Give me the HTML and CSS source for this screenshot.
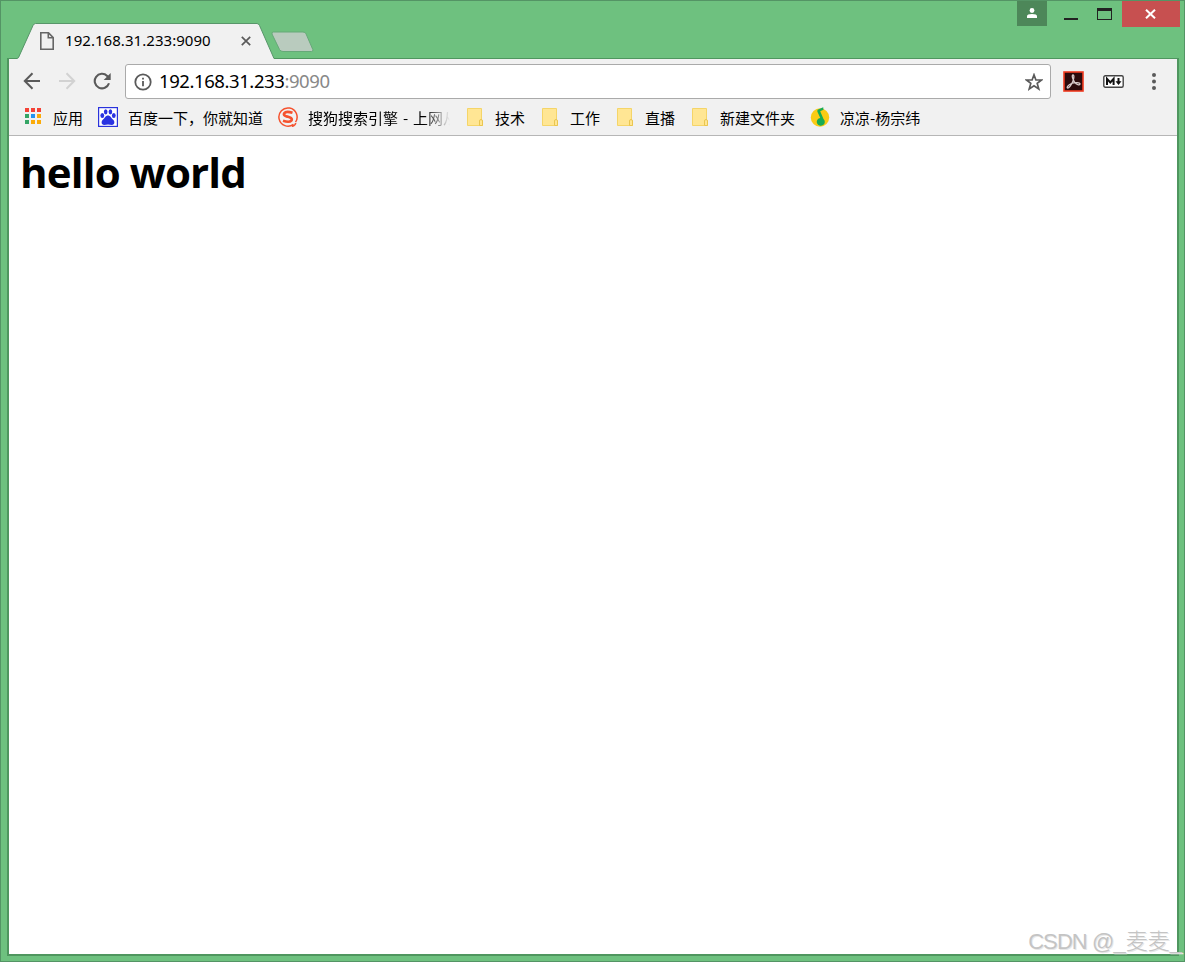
FILE: index.html
```html
<!DOCTYPE html>
<html lang="zh-CN">
<head>
    <meta charset="UTF-8">
    <title>192.168.31.233:9090</title>
    <link rel="stylesheet" href="styles.css">
</head>
<body>
    <div class="window">
        <header class="titlebar">
            <div class="tab">
                <svg class="tab-shape" width="258" height="37" viewBox="0 0 258 37">
                    <path d="M0 37V35.5L1.5 35 16 2.5Q17 .5 18.500 .5H240Q241.500 .5 242.500 2.500L257 35.500V37Z" fill="#f1f1f1"/>
                    <path d="M0 35.5L1.500 34.500 16 2.500Q17 .5 18.500 .5H240Q241.500 .5 242.500 2.500L257 35.500" fill="none" stroke="#58966a"/>
                </svg>
                <svg class="tab-page" width="14" height="18" viewBox="0 0 14 18" fill="none" stroke="#666" stroke-width="1.600">
                    <path d="M.8.8H8.500L13.200 5.600V17.200H.8ZM8.300 1V5.800H13"/>
                </svg>
                <span class="tab-title">192.168.31.233:9090</span>
                <svg class="tab-close" width="10" height="10" viewBox="0 0 10 10" stroke="#5a5a5a" stroke-width="1.700">
                    <path d="M.8.8L9.200 9.200M9.200.8L.8 9.200"/>
                </svg>
            </div>
            <svg class="new-tab" width="43" height="22" viewBox="0 0 43 22">
                <path d="M2.500 1H32Q34 1 35 2.800L41.800 18.500Q42.500 20.500 40.500 20.500H12Q9.500 20.500 8.500 18.500L1 3Q.5 1 2.500 1Z" fill="#b9cbbe" stroke="#66a978"/>
            </svg>
            <div class="controls">
                <div class="user">
                    <svg width="10" height="10" viewBox="0 0 10 10" fill="#fff"><circle cx="5" cy="2.500" r="2.400"/><path d="M0 10V8.200Q0 6 5 6T10 8.200V10Z"/></svg>
                </div>
                <div class="minimize"></div>
                <div class="maximize"></div>
                <div class="close">
                    <svg width="11" height="10" viewBox="0 0 11 10" stroke="#fff" stroke-width="2"><path d="M1 .7L10 9.300M10 .7L1 9.300"/></svg>
                </div>
            </div>
        </header>

        <main class="browser">
            <div class="toolbar">
                <svg class="back" width="18" height="18" viewBox="0 0 18 18" fill="none" stroke="#5a5a5a" stroke-width="2"><path d="M17 9H2M9.500 1.300L1.800 9L9.500 16.700"/></svg>
                <svg class="forward" width="18" height="18" viewBox="0 0 18 18" fill="none" stroke="#d2d2d2" stroke-width="2"><path d="M1 9H16M8.500 1.300L16.200 9L8.500 16.700"/></svg>
                <svg class="reload" width="18" height="18" viewBox="0 0 18 18"><path d="M16 11.300A7.300 7.300 0 1 1 14.200 3.900L16 5.700" fill="none" stroke="#5a5a5a" stroke-width="2.100"/><path d="M17.700 1V8H10.700Z" fill="#5a5a5a"/></svg>
                <div class="address">
                    <svg width="18" height="18" viewBox="0 0 18 18"><circle cx="9" cy="9" r="7.700" fill="none" stroke="#5a5a5a" stroke-width="1.800"/><path d="M8.100 4.800H9.900V6.600H8.100ZM8.100 8H9.900V13.200H8.100Z" fill="#5a5a5a"/></svg>
                    <span class="url">192.168.31.233<span class="port">:9090</span></span>
                    <svg class="star" width="18" height="18" viewBox="0 0 18 18"><path d="M9 1.800L10.900 7H16.500L12.200 10.400L13.800 16L9 12.800L4.200 16L5.800 10.400L1.500 7H7.100Z" fill="none" stroke="#5a5a5a" stroke-width="1.700"/></svg>
                </div>
                <svg class="pdf" width="21" height="21" viewBox="0 0 21 21">
                    <rect x="1" y="1" width="19" height="19" fill="#2b0a0c" stroke="#f03a20" stroke-width="1.600"/>
                    <path d="M10 4C8.500 4 9.500 8 11.500 11S16.500 14.500 17 13 12 11 8.500 12.500 3.500 16.500 4.500 17 8.500 14 9.800 10.500 11.300 4 10 4Z" fill="none" stroke="#d8c9c9" stroke-width="1.300"/>
                </svg>
                <svg class="markdown" width="21" height="13" viewBox="0 0 21 13">
                    <rect x=".8" y=".8" width="19.400" height="11.400" rx="1.500" fill="#fff" stroke="#444" stroke-width="1.400"/>
                    <path d="M4 10V3.800L7.300 7.500L10.600 3.800V10" fill="none" stroke="#111" stroke-width="2"/>
                    <path d="M14.500 3H16.500V6.300H18.500L15.500 10L12.500 6.300H14.500Z" fill="#111"/>
                </svg>
                <svg class="menu" width="4" height="17" viewBox="0 0 4 17" fill="#5a5a5a"><circle cx="2" cy="2" r="2"/><circle cx="2" cy="8.500" r="2"/><circle cx="2" cy="15" r="2"/></svg>
            </div>

            <nav class="bookmarks">
                <div class="bookmark">
                    <svg width="20" height="20" viewBox="0 0 20 20">
                        <path d="M2 1H6V5H2ZM8 1H12V5H8ZM14 1H18V5H14Z" fill="#f44236"/>
                        <path d="M8 7H12V11H8Z" fill="#2493f0"/>
                        <path d="M2 7H6V11H2ZM2 13H6V17H2Z" fill="#35a565"/>
                        <path d="M14 7H18V11H14ZM8 13H12V17H8ZM14 13H18V17H14Z" fill="#fbab09"/>
                    </svg>
                    <span>应用</span>
                </div>
                <div class="bookmark">
                    <svg width="20" height="20" viewBox="0 0 20 20">
                        <rect x=".6" y=".6" width="18.800" height="18.800" fill="#fff" stroke="#2932dc" stroke-width="1.200"/>
                        <g fill="#2932e1">
                            <ellipse cx="4.300" cy="8.600" rx="1.900" ry="2.500"/><ellipse cx="7.700" cy="4.800" rx="1.800" ry="2.600"/>
                            <ellipse cx="12.400" cy="4.800" rx="1.800" ry="2.600"/><ellipse cx="15.800" cy="8.600" rx="1.900" ry="2.500"/>
                            <path d="M10 8.500C12.500 8.500 13 11 15 12.500S17 18 13.800 18Q12 17.500 10 17.500T6.200 18C3 18 3 14 5 12.500S7.500 8.500 10 8.500Z"/>
                        </g>
                    </svg>
                    <span>百度一下，你就知道</span>
                </div>
                <div class="bookmark">
                    <svg width="20" height="20" viewBox="0 0 20 20" fill="none" stroke="#f5522e">
                        <path d="M15.500 17.300A9.100 9.100 0 1 1 17.500 15.200M14 19.500Q17.500 18.500 17.700 16" stroke-width="1.500"/>
                        <path d="M14.500 5.800Q8 3.800 6.300 6.200C5 8.700 8 9.200 10 9.800S15 11.500 13.300 13.600Q11.500 15.700 5 13.800" stroke-width="2.700"/>
                    </svg>
                    <span class="faded">搜狗搜索引擎 - 上网从</span>
                </div>
                <div class="bookmark">
                    <svg width="20" height="20" viewBox="0 0 20 20"><path d="M2.500 1.500H16.500V13L17.500 14V18.500H2.500Z" fill="#ffe694" stroke="#f5d568"/><path d="M14.500 18.500V14Q14.500 12.500 16 12.500T17.500 14V18.500Z" fill="#ffe694" stroke="#eac650"/></svg>
                    <span>技术</span>
                </div>
                <div class="bookmark">
                    <svg width="20" height="20" viewBox="0 0 20 20"><path d="M2.500 1.500H16.500V13L17.500 14V18.500H2.500Z" fill="#ffe694" stroke="#f5d568"/><path d="M14.500 18.500V14Q14.500 12.500 16 12.500T17.500 14V18.500Z" fill="#ffe694" stroke="#eac650"/></svg>
                    <span>工作</span>
                </div>
                <div class="bookmark">
                    <svg width="20" height="20" viewBox="0 0 20 20"><path d="M2.500 1.500H16.500V13L17.500 14V18.500H2.500Z" fill="#ffe694" stroke="#f5d568"/><path d="M14.500 18.500V14Q14.500 12.500 16 12.500T17.500 14V18.500Z" fill="#ffe694" stroke="#eac650"/></svg>
                    <span>直播</span>
                </div>
                <div class="bookmark">
                    <svg width="20" height="20" viewBox="0 0 20 20"><path d="M2.500 1.500H16.500V13L17.500 14V18.500H2.500Z" fill="#ffe694" stroke="#f5d568"/><path d="M14.500 18.500V14Q14.500 12.500 16 12.500T17.500 14V18.500Z" fill="#ffe694" stroke="#eac650"/></svg>
                    <span>新建文件夹</span>
                </div>
                <div class="bookmark">
                    <svg width="20" height="20" viewBox="0 0 20 20"><circle cx="10" cy="10.500" r="9.200" fill="#fbcb14"/><path d="M7.500 2.800L13.200.3 13.500 2.800 10.200 4.200 13.500 12A4 3.900 0 1 1 10.300 11L7.300 4.500Z" fill="#18ac54"/></svg>
                    <span>凉凉-杨宗纬</span>
                </div>
            </nav>

            <section class="page">
                <h1>hello world</h1>
            </section>
        </main>
        <div class="watermark">CSDN @<span class="name">_麦麦_</span></div>
    </div>
</body>
</html>
```
FILE: styles.css
```css
* {
    box-sizing: border-box;
}
body {
    margin: 0;
    font-family: "Noto Sans", "Noto Sans CJK SC", sans-serif;
    color: #000;
}
svg {
    display: block;
    flex: none;
}
.window {
    position: relative;
    display: flex;
    flex-direction: column;
    height: 962px;
    padding: 0 5px 5px 6px;
    border: 1px solid #549465;
    background-color: #6ec17f;
    overflow: hidden;
}
.titlebar {
    display: flex;
    align-items: flex-start;
    height: 57px;
    flex: none;
    padding-left: 10px;
}
.tab {
    position: relative;
    z-index: 1;
    display: flex;
    align-items: center;
    width: 258px;
    height: 37px;
    margin-top: 22px;
    padding: 0 24px 2px 23px;
}
.tab-shape {
    position: absolute;
    left: 0;
    top: 0;
}
.tab-page, .tab-title, .tab-close {
    position: relative;
}
.tab-title {
    margin: -2px 0 0 11px;
    font-size: 15px;
    line-height: 20px;
    letter-spacing: 0.05px;
}
.tab-close {
    margin-left: auto;
}
.new-tab {
    margin: 30px 0 0 -4px;
}
.controls {
    display: flex;
    margin-left: auto;
    margin-right: -1px;
}
.user {
    display: flex;
    justify-content: center;
    width: 30px;
    height: 25px;
    padding-top: 7px;
    background-color: #4d8759;
}
.minimize {
    width: 14px;
    height: 2px;
    margin: 17px 0 0 17px;
    background-color: #222;
}
.maximize {
    width: 15px;
    height: 12px;
    margin: 7px 10px 0 19px;
    border: 1px solid #222;
    border-top-width: 3px;
}
.close {
    display: flex;
    justify-content: center;
    width: 58px;
    height: 26px;
    padding: 8px 2px 0 0;
    background-color: #c75050;
}
.browser {
    display: flex;
    flex-direction: column;
    flex: 1;
    border: 2px solid #4f965f;
    border-top-width: 1px;
    background-color: #fff;
}
.toolbar {
    display: flex;
    align-items: center;
    height: 43px;
    flex: none;
    padding: 2px 21px 0 14px;
    background-color: #f1f1f1;
}
.back, .forward, .reload {
    margin-top: -2px;
}
.forward, .reload {
    margin-left: 17px;
}
.address {
    display: flex;
    align-items: center;
    flex: 1;
    height: 35px;
    margin-left: 14px;
    padding: 0 7px 0 8px;
    border: 1px solid #aaa;
    border-radius: 3px;
    background-color: #fff;
}
.url {
    margin: -2px 0 0 7px;
    font-size: 18.5px;
    line-height: 24px;
    letter-spacing: -0.42px;
}
.port {
    color: #888;
}
.star {
    margin-left: auto;
}
.pdf {
    margin-left: 12px;
}
.markdown {
    margin-left: 19px;
}
.menu {
    margin-left: 28px;
}
.bookmarks {
    display: flex;
    gap: 15px;
    height: 34px;
    flex: none;
    padding: 5px 14px 0;
    border-bottom: 1px solid #b6b6b6;
    background-color: #f1f1f1;
}
.bookmark {
    display: flex;
    gap: 10px;
    height: 22px;
    font-family: "Noto Sans CJK SC", sans-serif;
    font-size: 15px;
    font-weight: 400;
    line-height: 22px;
    white-space: nowrap;
}
/* long titles fade out at the end */
.faded {
    width: 142px;
    word-spacing: 1.5px;
    -webkit-mask-image: linear-gradient(to right, #000 116px, transparent 142px);
    mask-image: linear-gradient(to right, #000 116px, transparent 142px);
}
.page {
    flex: 1;
}
h1 {
    margin: 7px 0 0 11px;
    font-family: "Open Sans", sans-serif;
    font-size: 42px;
    line-height: 57px;
    font-weight: 700;
    letter-spacing: -0.85px;
}
.watermark {
    position: absolute;
    right: 2px;
    bottom: 2px;
    font-family: "Liberation Sans", "Noto Sans CJK SC", sans-serif;
    font-size: 22px;
    font-weight: 300;
    line-height: 34px;
    letter-spacing: -0.9px;
    color: #c4c4c4;
    text-shadow: 1px 1px 0 #e8e8e8;
    white-space: nowrap;
}
.name {
    letter-spacing: 0;
}
```
